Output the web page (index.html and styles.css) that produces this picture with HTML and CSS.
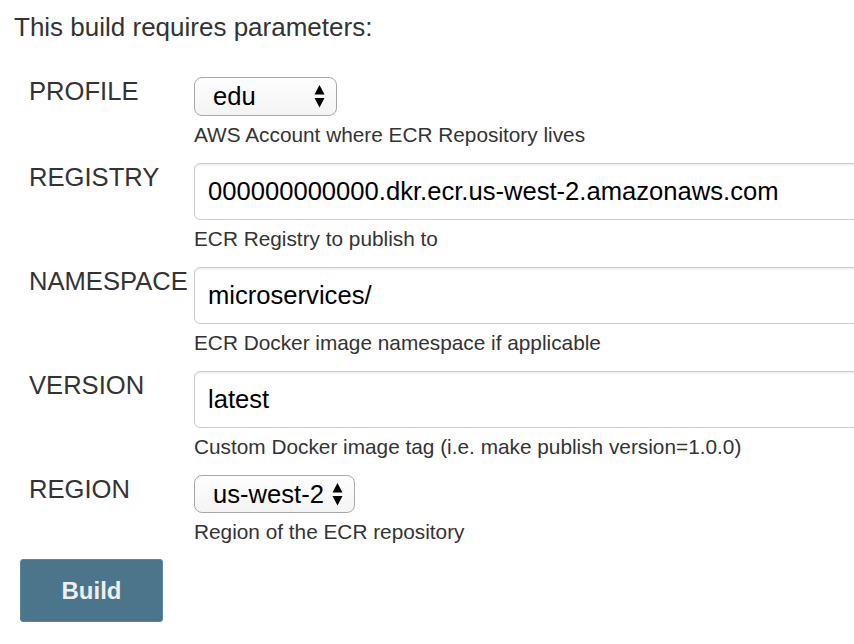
FILE: index.html
```html
<!DOCTYPE html>
<html>
<head>
<meta charset="utf-8">
<title>Build parameters</title>
<link rel="stylesheet" href="styles.css">
</head>
<body>
<div class="page">
  <p class="title">This build requires parameters:</p>
  <div class="params">
    <div class="row">
      <div class="label">PROFILE</div>
      <div class="field">
        <div class="select select-profile">
          <span class="select-value">edu</span>
          <svg class="arrows" width="11" height="23" viewBox="0 0 11 23"><path d="M5.5 0 L10.5 9.5 L0.5 9.5 Z M0.5 13 L10.5 13 L5.5 22.5 Z" fill="#000"/></svg>
        </div>
        <div class="desc">AWS Account where ECR Repository lives</div>
      </div>
    </div>
    <div class="row">
      <div class="label">REGISTRY</div>
      <div class="field">
        <input class="input" type="text" value="000000000000.dkr.ecr.us-west-2.amazonaws.com">
        <div class="desc">ECR Registry to publish to</div>
      </div>
    </div>
    <div class="row">
      <div class="label">NAMESPACE</div>
      <div class="field">
        <input class="input" type="text" value="microservices/">
        <div class="desc">ECR Docker image namespace if applicable</div>
      </div>
    </div>
    <div class="row">
      <div class="label">VERSION</div>
      <div class="field">
        <input class="input" type="text" value="latest">
        <div class="desc">Custom Docker image tag (i.e. make publish version=1.0.0)</div>
      </div>
    </div>
    <div class="row">
      <div class="label">REGION</div>
      <div class="field">
        <div class="select select-region">
          <span class="select-value">us-west-2</span>
          <svg class="arrows" width="11" height="23" viewBox="0 0 11 23"><path d="M5.5 0 L10.5 9.5 L0.5 9.5 Z M0.5 13 L10.5 13 L5.5 22.5 Z" fill="#000"/></svg>
        </div>
        <div class="desc">Region of the ECR repository</div>
      </div>
    </div>
  </div>
  <button class="build" type="button">Build</button>
</div>
</body>
</html>
```
FILE: styles.css
```css
html, body {
  margin: 0;
  padding: 0;
  background: #fff;
  overflow: hidden;
}

body {
  font-family: "Liberation Sans", Arial, Helvetica, sans-serif;
  color: #333;
}

.page {
  padding: 12px 0 20px 14px;
  overflow: hidden;
}

.title {
  margin: 0;
  font-size: 26px;
  line-height: 30px;
}

.params {
  margin-top: 35px;
}

.row {
  display: grid;
  grid-template-columns: 180px 1fr;
}

.label {
  padding-left: 15px;
  font-size: 25.6px;
  line-height: 29px;
  color: #333;
}

.field {
  display: flex;
  flex-direction: column;
  align-items: flex-start;
  min-width: 0;
}

.select {
  box-sizing: border-box;
  height: 39px;
  border: 1.5px solid #a8a8a8;
  border-radius: 8px;
  background: linear-gradient(#fefefe, #f4f4f4);
  display: flex;
  align-items: center;
  justify-content: space-between;
  padding: 0 11px 0 18px;
  font-size: 25.6px;
  color: #000;
}

.select-profile {
  width: 143px;
}

.select-region {
  width: 161px;
  height: 38px;
  padding-right: 11px;
}

.select-value {
  line-height: 29px;
}

.arrows {
  display: block;
  flex: none;
}

.input {
  box-sizing: border-box;
  width: 700px;
  height: 57px;
  margin: 0;
  border: 1.5px solid #cccccc;
  border-radius: 6px;
  box-shadow: inset 0 2px 2px rgba(0, 0, 0, 0.06);
  padding: 0 13px;
  font-family: "Liberation Sans", Arial, Helvetica, sans-serif;
  font-size: 25.6px;
  color: #000;
  background: #fff;
  outline: none;
}

.desc {
  margin: 7px 0 16px;
  font-size: 20.8px;
  line-height: 24px;
  color: #333;
}

.build {
  display: block;
  margin: -1px 0 0 6px;
  width: 143px;
  height: 63px;
  background: #4b758a;
  border: 1.5px solid #5a87a0;
  border-radius: 3px;
  color: #eeeeee;
  font-family: "Liberation Sans", Arial, Helvetica, sans-serif;
  font-weight: bold;
  font-size: 24px;
  padding: 0;
}
```
